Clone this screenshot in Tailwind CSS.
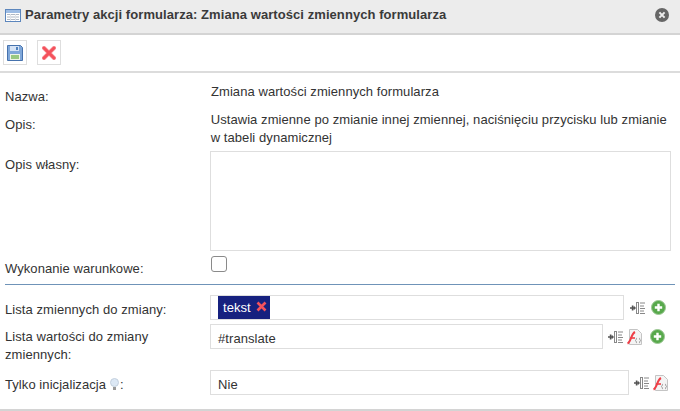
<!DOCTYPE html>
<html lang="pl">
<head>
  <meta charset="UTF-8" />
  <title>Parametry akcji formularza</title>
  <script src="https://cdn.jsdelivr.net/npm/@tailwindcss/browser@4"></script>
</head>
<body class="w-[680px] h-[411px] overflow-hidden bg-white font-['Liberation_Sans',Arial,sans-serif] text-[13px] leading-[18px] tracking-[0.07px] text-[#333]">

  <!-- Header -->
  <div class="h-[35px] bg-[#ececec] border-b-2 border-[#d4d4d4] flex items-center pl-[5px] pr-[3px] pb-[3px]">
    <svg width="16" height="13" viewBox="0 0 16 13" class="mr-[4px]">
      <rect x="0.5" y="0.5" width="15" height="12" fill="#fff" stroke="#5c86bd"/>
      <rect x="1" y="1" width="14" height="3" fill="#9dbce4"/>
      <path d="M2 5.500h12M2 8h12M2 10.500h12" stroke="#b0b8c4"/>
      <path d="M5.500 5v7M10.500 5v7" stroke="#dfe3e8"/>
    </svg>
    <span class="font-bold text-[#3a3a3a]">Parametry akcji formularza: Zmiana wartości zmiennych formularza</span>
    <svg width="14" height="14" viewBox="0 0 14 14" class="ml-auto mr-[8px]">
      <circle cx="7" cy="7" r="7" fill="#666"/>
      <path d="M4.400 4.400l5.200 5.200M9.600 4.400l-5.200 5.200" stroke="#eee" stroke-width="2"/>
    </svg>
  </div>

  <!-- Toolbar -->
  <div class="h-[38px] border-b-2 border-[#dcdcdc] flex items-center gap-[10px] pl-[3px] pb-[1px]">
    <button class="w-[24px] h-[25px] border border-[#dedede] flex items-center justify-center">
      <svg width="16" height="16" viewBox="0 0 16 16">
        <path d="M0.500 0.500h13l2 2v13h-15z" fill="#7fa7d9" stroke="#4672ad"/>
        <rect x="3" y="1" width="9" height="5" fill="#d5e3f5"/>
        <rect x="9" y="2" width="2" height="3" fill="#4f81bd"/>
        <rect x="3" y="9" width="10" height="6" fill="#eef4e6"/>
        <path d="M4 11h8M4 13h8" stroke="#7dbb5f" stroke-width="1.400"/>
      </svg>
    </button>
    <button class="w-[24px] h-[25px] border border-[#dedede] flex items-center justify-center">
      <svg width="14" height="14" viewBox="0 0 14 14">
        <path d="M2 2l10 10M12 2L2 12" stroke="#f7a0a5" stroke-width="4.200" stroke-linecap="round"/>
        <path d="M2 2l10 10M12 2L2 12" stroke="#f4525c" stroke-width="3" stroke-linecap="round"/>
      </svg>
    </button>
  </div>

  <!-- Form -->
  <div class="pl-[5px] pr-[9px]">
    <div class="flex pt-[10px] h-[36px]">
      <div class="w-[206px] pt-[5px]">Nazwa:</div>
      <div>Zmiana wartości zmiennych formularza</div>
    </div>
    <div class="flex h-[42px] pt-[2px]">
      <div class="w-[206px] pt-[5px]">Opis:</div>
      <div class="w-[461px]">Ustawia zmienne po zmianie innej zmiennej, naciśnięciu przycisku lub zmianie w tabeli dynamicznej</div>
    </div>
    <div class="flex">
      <div class="w-[205px] pt-[5px]">Opis własny:</div>
      <div class="w-[461px] h-[100px] border border-[#dedede]"></div>
    </div>
    <div class="flex items-start h-[33px] pt-[5px]">
      <div class="w-[206px] pt-[4px]">Wykonanie warunkowe:</div>
      <div class="w-[16px] h-[16px] border border-[#8a8a8a] rounded-[3px]"></div>
    </div>
  </div>

  <div class="border-t border-[#6f93b8] mx-[5px]"></div>

  <div class="pl-[5px] pt-[10px]">
    <div class="flex items-center h-[25px]">
      <div class="w-[205px] pt-[5px]">Lista zmiennych do zmiany:</div>
      <div class="w-[414px] h-[25px] border border-[#dedede] flex items-center pl-[7px]">
        <span class="flex items-center h-[23px] w-[52px] bg-[#16217f] text-white pl-[5px] gap-[5px]">tekst
          <svg width="11" height="11" viewBox="0 0 11 11" class="mb-[2px]"><path d="M1.500 1.500l8 8M9.500 1.500l-8 8" stroke="#f4525c" stroke-width="2.600"/></svg>
        </span>
      </div>
      <div class="flex items-center ml-[6px] gap-[5px]">
        <svg width="16" height="14" viewBox="0 0 16 14"><path d="M0 7h4M2.500 4.500v5" stroke="#555" stroke-width="1.400"/><path d="M3.500 4.500l2.500 2.500-2.500 2.500z" fill="#555"/><rect x="6.500" y="1.500" width="2" height="11" fill="#fff" stroke="#888"/><path d="M10 2h5M10 5h4M10 7.500h5M10 10h4M10 12.500h5" stroke="#888"/></svg>
        <svg width="15" height="15" viewBox="0 0 15 15"><circle cx="7.500" cy="7.500" r="7" fill="#58a94c" stroke="#9cc794"/><path d="M7.500 3.800v7.400M3.800 7.500h7.400" stroke="#fff" stroke-width="2.400"/></svg>
      </div>
    </div>

    <div class="flex items-start h-[46px] mt-[4px]">
      <div class="w-[205px] pt-[4px]">Lista wartości do zmiany zmiennych:</div>
      <div class="w-[393px] h-[25px] border border-[#dedede] flex items-center pl-[7px] pt-[5px]">#translate</div>
      <div class="flex items-center ml-[5px] h-[25px] gap-[3px]">
        <svg width="16" height="14" viewBox="0 0 16 14"><path d="M0 7h4M2.500 4.500v5" stroke="#555" stroke-width="1.400"/><path d="M3.500 4.500l2.500 2.500-2.500 2.500z" fill="#555"/><rect x="6.500" y="1.500" width="2" height="11" fill="#fff" stroke="#888"/><path d="M10 2h5M10 5h4M10 7.500h5M10 10h4M10 12.500h5" stroke="#888"/></svg>
        <svg width="16" height="16" viewBox="0 0 16 16"><path d="M2.500 0.500h8l4 4v11h-12z" fill="#f4f4f4" stroke="#c4c4c4"/><path d="M0.500 14.500C4 13 4 5 8 3" fill="none" stroke="#ee3f48" stroke-width="2"/><path d="M3 9h5" stroke="#ee3f48" stroke-width="1.600"/><path d="M10 9c-1 0-.5 2-1.500 2.500 1 .5.500 2.500 1.500 2.500M12 9c1 0 .5 2 1.500 2.500-1 .5-.5 2.500-1.500 2.500" fill="none" stroke="#999"/></svg>
        <svg width="15" height="15" viewBox="0 0 15 15" class="ml-[4px]"><circle cx="7.500" cy="7.500" r="7" fill="#58a94c" stroke="#9cc794"/><path d="M7.500 3.800v7.400M3.800 7.500h7.400" stroke="#fff" stroke-width="2.400"/></svg>
      </div>
    </div>

    <div class="flex items-center h-[25px]">
      <div class="w-[205px] flex items-center pt-[4px]">Tylko inicjalizacja
        <svg width="9" height="13" viewBox="0 0 9 13" class="ml-[4px] mr-[1px]"><circle cx="4.500" cy="4.500" r="4" fill="#dce8f5" stroke="#c3d0dd"/><rect x="3" y="9" width="3" height="3" fill="#999"/></svg>:
      </div>
      <div class="w-[419px] h-[25px] border border-[#dedede] flex items-center pl-[7px] pt-[5px]">Nie</div>
      <div class="flex items-center ml-[5px] gap-[3px]">
        <svg width="16" height="14" viewBox="0 0 16 14"><path d="M0 7h4M2.500 4.500v5" stroke="#555" stroke-width="1.400"/><path d="M3.500 4.500l2.500 2.500-2.500 2.500z" fill="#555"/><rect x="6.500" y="1.500" width="2" height="11" fill="#fff" stroke="#888"/><path d="M10 2h5M10 5h4M10 7.500h5M10 10h4M10 12.500h5" stroke="#888"/></svg>
        <svg width="16" height="16" viewBox="0 0 16 16"><path d="M2.500 0.500h8l4 4v11h-12z" fill="#f4f4f4" stroke="#c4c4c4"/><path d="M0.500 14.500C4 13 4 5 8 3" fill="none" stroke="#ee3f48" stroke-width="2"/><path d="M3 9h5" stroke="#ee3f48" stroke-width="1.600"/><path d="M10 9c-1 0-.5 2-1.500 2.500 1 .5.500 2.500 1.500 2.500M12 9c1 0 .5 2 1.500 2.500-1 .5-.5 2.500-1.500 2.500" fill="none" stroke="#999"/></svg>
      </div>
    </div>
  </div>

  <div class="mt-[14px] border-t-2 border-[#d4d4d4]"></div>
</body>
</html>
